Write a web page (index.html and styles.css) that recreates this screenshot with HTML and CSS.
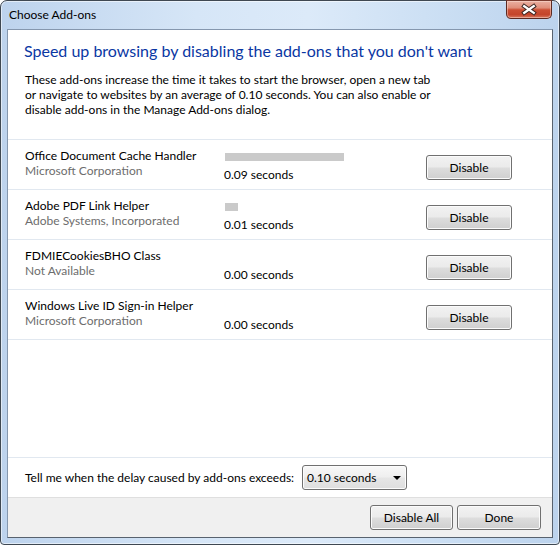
FILE: index.html
```html
<!DOCTYPE html>
<html lang="en">
<head>
<meta charset="utf-8">
<title>Choose Add-ons</title>
<link rel="stylesheet" href="styles.css">
</head>
<body>
<div class="window">
  <div class="titlebar">
    <span class="title">Choose Add-ons</span>
    <div class="close">
      <svg width="46" height="18" viewBox="0 0 46 18">
        <g stroke-linecap="square">
          <path d="M18 5 L28 12 M28 5 L18 12" stroke="#3a2420" stroke-width="4.4"/>
          <path d="M18 5 L28 12 M28 5 L18 12" stroke="#ffffff" stroke-width="2.4"/>
        </g>
      </svg>
    </div>
  </div>
  <div class="client">
    <div class="main">
      <h1 class="heading">Speed up browsing by disabling the add-ons that you don't want</h1>
      <p class="intro">These add-ons increase the time it takes to start the browser, open a new tab<br>or navigate to websites by an average of 0.10 seconds. You can also enable or<br>disable add-ons in the Manage Add-ons dialog.</p>
      <div class="list">
        <div class="row">
          <div class="info">
            <div class="name">Office Document Cache Handler</div>
            <div class="publisher">Microsoft Corporation</div>
          </div>
          <div class="timing">
            <div class="bar" style="width:119px"></div>
            <div class="time">0.09 seconds</div>
          </div>
          <button class="btn btn-row">Disable</button>
        </div>
        <div class="row">
          <div class="info">
            <div class="name">Adobe PDF Link Helper</div>
            <div class="publisher">Adobe Systems, Incorporated</div>
          </div>
          <div class="timing">
            <div class="bar" style="width:13px"></div>
            <div class="time">0.01 seconds</div>
          </div>
          <button class="btn btn-row">Disable</button>
        </div>
        <div class="row">
          <div class="info">
            <div class="name">FDMIECookiesBHO Class</div>
            <div class="publisher">Not Available</div>
          </div>
          <div class="timing">
            <div class="bar" style="width:0px"></div>
            <div class="time">0.00 seconds</div>
          </div>
          <button class="btn btn-row">Disable</button>
        </div>
        <div class="row">
          <div class="info">
            <div class="name">Windows Live ID Sign-in Helper</div>
            <div class="publisher">Microsoft Corporation</div>
          </div>
          <div class="timing">
            <div class="bar" style="width:0px"></div>
            <div class="time">0.00 seconds</div>
          </div>
          <button class="btn btn-row">Disable</button>
        </div>
      </div>
      <div class="spacer"></div>
      <div class="threshold">
        <span class="threshold-label">Tell me when the delay caused by add-ons exceeds:</span>
        <div class="combo">
          <span class="combo-value">0.10 seconds</span>
          <span class="combo-arrow"></span>
        </div>
      </div>
    </div>
    <div class="footer">
      <button class="btn btn-footer btn-disable-all">Disable All</button>
      <button class="btn btn-footer btn-done">Done</button>
    </div>
  </div>
</div>
</body>
</html>
```

FILE: styles.css
```css
* {
  box-sizing: border-box;
}

html, body {
  margin: 0;
  padding: 0;
  background: #ffffff;
}

body {
  width: 560px;
  height: 545px;
  font-family: Lato, "Noto Sans", sans-serif;
  font-size: 12px;
  color: #000000;
}

.window {
  width: 560px;
  height: 545px;
  border: 1px solid #3f4852;
  border-radius: 7px 7px 4px 4px;
  background: linear-gradient(to right, #bdd3ed 0%, #d6e6f7 35%, #dceaf9 55%, #cadef3 80%, #bcd3ed 100%);
  box-shadow: inset 0 0 0 1px rgba(255, 255, 255, 0.55);
  padding: 0 6px 6px 6px;
  display: flex;
  flex-direction: column;
}

.titlebar {
  height: 28px;
  display: flex;
  justify-content: space-between;
  align-items: flex-start;
}

.title {
  padding: 6px 0 0 2px;
  line-height: 15px;
  font-size: 12px;
  color: #000000;
}

.close {
  width: 46px;
  height: 19px;
  margin-top: -1px;
  margin-right: 1px;
  border: 1px solid #5c2a22;
  border-top-color: #7a3a2e;
  border-radius: 0 0 5px 5px;
  background: linear-gradient(#eab0a2 0%, #df8e7a 40%, #cc4f34 52%, #c4452b 80%, #d97860 100%);
  box-shadow: inset 0 0 0 1px rgba(255, 230, 220, 0.45);
  display: flex;
}

.close svg {
  display: block;
  margin: 0 auto;
}

.client {
  flex: 1;
  border: 1px solid;
  border-color: #8597ae #58626e #58626e #8597ae;
  background: #ffffff;
  display: flex;
  flex-direction: column;
}

.main {
  flex: 1;
  padding-top: 10px;
  display: flex;
  flex-direction: column;
}

.heading {
  margin: 0 0 10px 16px;
  font-size: 16px;
  line-height: 22px;
  font-weight: normal;
  color: #0a37a3;
}

.intro {
  margin: 0 10px 22px 17px;
  line-height: 15px;
  white-space: nowrap;
}

.list {
  border-top: 1px solid #e1e8f0;
}

.row {
  height: 50px;
  border-bottom: 1px solid #e1e8f0;
  padding: 8px 0 0 17px;
  display: flex;
  align-items: flex-start;
}

.info {
  width: 199px;
  line-height: 15px;
}

.publisher {
  color: #6d6d6d;
}

.timing {
  width: 202px;
}

.bar {
  height: 8px;
  margin: 5px 0 0 1px;
  background: #cacaca;
}

.time {
  margin-top: 6px;
  line-height: 15px;
}

.btn {
  height: 25px;
  padding: 0;
  border: 1px solid #707070;
  border-radius: 3px;
  background: linear-gradient(#f2f2f2 0%, #ebebeb 48%, #dddddd 52%, #cfcfcf 100%);
  box-shadow: inset 0 0 0 1px #fbfbfb;
  font-family: Lato, "Noto Sans", sans-serif;
  font-size: 12px;
  color: #000000;
}

.btn-row {
  width: 86px;
  margin-top: 7px;
}

.spacer {
  flex: 1;
}

.threshold {
  height: 40px;
  border-top: 1px solid #e1e8f0;
  padding: 7px 0 0 17px;
  display: flex;
  align-items: flex-start;
  gap: 8px;
}

.threshold-label {
  line-height: 25px;
}

.combo {
  width: 105px;
  height: 25px;
  border: 1px solid #707070;
  border-radius: 3px;
  background: linear-gradient(#f8f8f8 0%, #efefef 48%, #e6e6e6 52%, #dedede 100%);
  box-shadow: inset 0 0 0 1px #fcfcfc;
  display: flex;
  align-items: center;
  justify-content: space-between;
  padding: 0 5px 0 4px;
}

.combo-value {
  line-height: 15px;
}

.combo-arrow {
  width: 0;
  height: 0;
  border-left: 4px solid transparent;
  border-right: 4px solid transparent;
  border-top: 4px solid #000000;
  margin-top: 1px;
}

.footer {
  height: 40px;
  border-top: 1px solid #dfdfdf;
  background: #f0f0f0;
  padding: 7px 11px 0 0;
  display: flex;
  justify-content: flex-end;
  align-items: flex-start;
  gap: 4px;
}

.btn-disable-all {
  width: 83px;
}

.btn-done {
  width: 84px;
}
```
